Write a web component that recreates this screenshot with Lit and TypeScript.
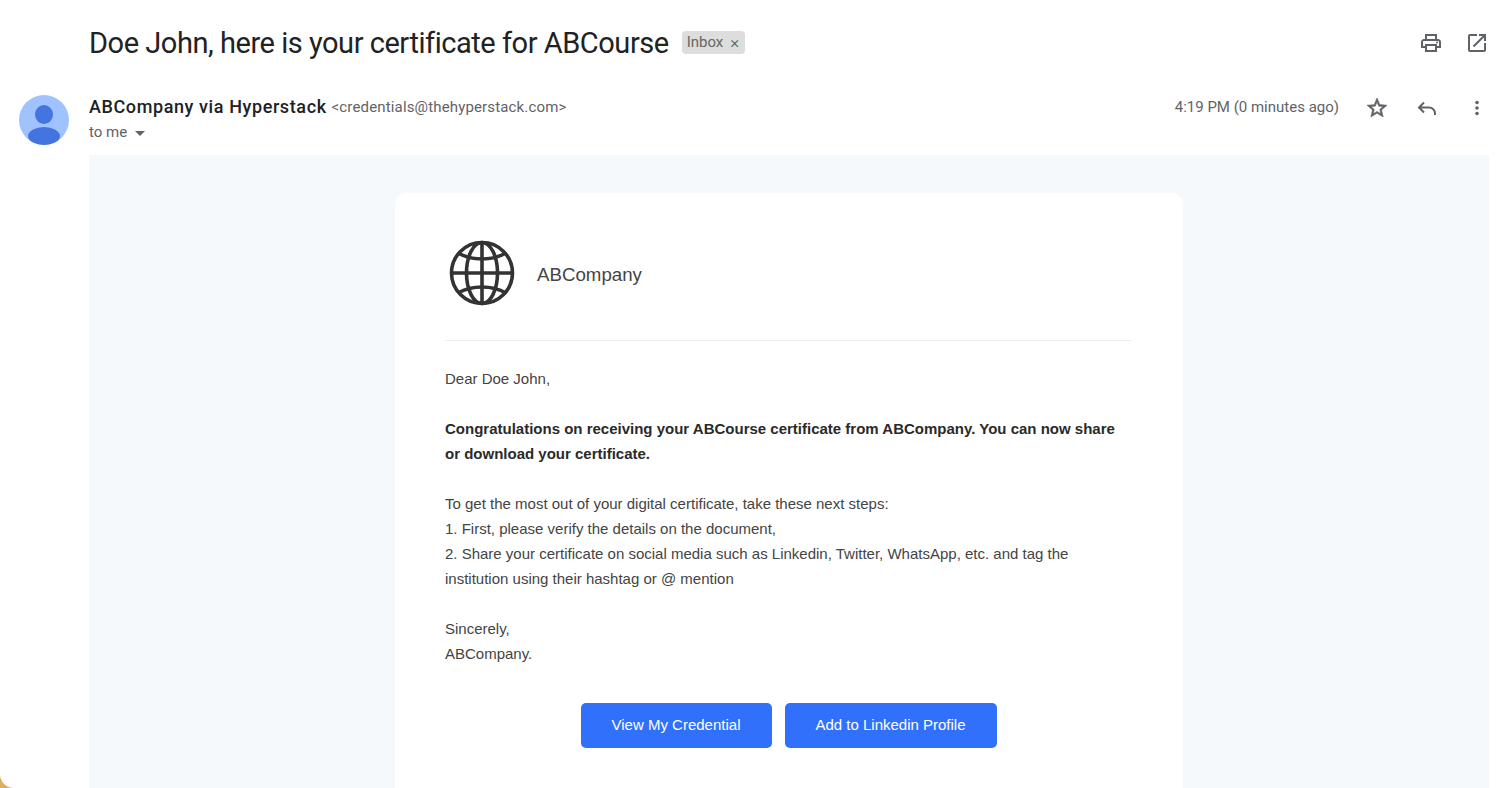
import { LitElement, html, css } from "lit";
import { customElement } from "lit/decorators.js";

@customElement("app-root")
export class AppRoot extends LitElement {
  static styles = css`
    :host {
      display: block;
      height: 100vh;
      background: #dcae60;
      overflow: hidden;
    }
    .page {
      height: 100%;
      background: #fff;
      border-bottom-left-radius: 14px;
      overflow: hidden;
      font-family: Roboto, "Liberation Sans", sans-serif;
      color: #202124;
    }
    .subject {
      display: flex;
      align-items: center;
      height: 84px;
      padding: 0 20px 0 89px;
    }
    .subject h1 {
      margin: 2px 0 0;
      font-size: 29px;
      font-weight: 400;
      letter-spacing: -0.46px;
      line-height: 36px;
      color: #222;
    }
    .chip {
      display: flex;
      align-items: center;
      gap: 7px;
      height: 23px;
      margin-left: 13px;
      padding: 0 6px 0 5px;
      border-radius: 4px;
      background: #dddddd;
      color: #666;
      font-size: 15px;
    }
    .chip i {
      font-style: normal;
      font-size: 17px;
      font-weight: 300;
      line-height: 1;
      color: #555;
    }
    .top-actions {
      display: flex;
      gap: 22px;
      margin-left: auto;
      margin-top: 1px;
    }
    svg.ic {
      display: block;
      width: 24px;
      height: 24px;
      fill: #5f6368;
    }
    .sender {
      display: flex;
      height: 71px;
      padding: 0 20px 0 19px;
    }
    .avatar {
      width: 50px;
      height: 50px;
      margin-top: 11px;
      flex: none;
    }
    .who {
      margin-left: 20px;
      padding-top: 12px;
    }
    .who b {
      font-size: 18px;
      font-weight: 500;
      letter-spacing: 0.6px;
      color: #202124;
    }
    .who span {
      position: relative;
      top: -1px;
      margin-left: 1px;
      font-size: 15px;
      letter-spacing: 0.15px;
      color: #5f6368;
    }
    .to {
      display: flex;
      align-items: center;
      gap: 8px;
      margin-top: 6px;
      font-size: 15px;
      color: #5f6368;
    }
    .caret {
      width: 0;
      height: 0;
      border: 5px solid transparent;
      border-top: 5px solid #5f6368;
      border-bottom: 0;
      margin-top: 2px;
    }
    .meta {
      display: flex;
      align-items: center;
      align-self: flex-start;
      margin-left: auto;
      margin-top: 12px;
      font-size: 15px;
      color: #5f6368;
    }
    .meta .time {
      margin-bottom: 2px;
    }
    .meta .btns {
      display: flex;
      gap: 26px;
      margin-left: 26px;
    }
    .star {
      stroke: #5f6368;
      stroke-width: 0.6;
    }
    .mail {
      height: 633px;
      margin: 0 20px 0 89px;
      padding-top: 38px;
      box-sizing: border-box;
      background: #f5f9fc;
    }
    .card {
      width: 788px;
      height: 640px;
      margin: 0 0 0 306px;
      padding: 46px 51px 0 50px;
      box-sizing: border-box;
      background: #fff;
      border-radius: 12px;
      font-family: "Liberation Sans", Arial, sans-serif;
      color: #444;
    }
    .brand {
      display: flex;
      align-items: center;
      height: 102px;
      padding: 0 0 33px 4px;
      border-bottom: 1px solid #eceef0;
      box-sizing: border-box;
      gap: 22px;
      font-size: 18.7px;
    }
    .brand span {
      padding-top: 4px;
    }
    .brand svg {
      width: 66px;
      height: 66px;
      flex: none;
    }
    .copy {
      margin-top: 25px;
      font-size: 15px;
      line-height: 25px;
    }
    .copy p {
      margin: 0 0 25px;
    }
    .copy strong {
      color: #2a2a2a;
    }
    .cta {
      display: flex;
      justify-content: center;
      gap: 13px;
      margin-top: 37px;
    }
    .cta a {
      display: flex;
      align-items: center;
      justify-content: center;
      height: 45px;
      padding-bottom: 2px;
      box-sizing: border-box;
      border-radius: 5px;
      background: #3070fb;
      color: #fff;
      font-size: 15px;
    }
    .cta a.first {
      width: 191px;
    }
    .cta a.second {
      width: 212px;
    }
  `;

  render() {
    return html`
      <div class="page">
        <div class="subject">
          <h1>Doe John, here is your certificate for ABCourse</h1>
          <div class="chip">Inbox <i>×</i></div>
          <div class="top-actions">
            <svg class="ic" viewBox="0 0 24 24">
              <path d="M19 8h-1V3H6v5H5c-1.66 0-3 1.34-3 3v6h4v4h12v-4h4v-6c0-1.66-1.34-3-3-3zM8 5h8v3H8V5zm8 12v2H8v-4h8v2zm2-2v-2H6v2H4v-4c0-.55.45-1 1-1h14c.55 0 1 .45 1 1v4h-2z" />
              <circle cx="18" cy="11.5" r="1" />
            </svg>
            <svg class="ic" viewBox="0 0 24 24">
              <path d="M19 19H5V5h7V3H5a2 2 0 0 0-2 2v14a2 2 0 0 0 2 2h14c1.1 0 2-.9 2-2v-7h-2v7zM14 3v2h3.59l-9.83 9.83 1.41 1.41L19 6.41V10h2V3h-7z" />
            </svg>
          </div>
        </div>
        <div class="sender">
          <svg class="avatar" viewBox="0 0 50 50">
            <circle cx="25" cy="25" r="25" fill="#a0c3ff" />
            <ellipse cx="25" cy="19.5" rx="9" ry="9.5" fill="#4374e0" />
            <ellipse cx="25" cy="41" rx="16" ry="9" fill="#4374e0" />
          </svg>
          <div class="who">
            <div><b>ABCompany via Hyperstack</b> <span>&lt;credentials@thehyperstack.com&gt;</span></div>
            <div class="to">to me <div class="caret"></div></div>
          </div>
          <div class="meta">
            <div class="time">4:19 PM (0 minutes ago)</div>
            <div class="btns">
              <svg class="ic star" viewBox="0 0 24 24">
                <path d="M22 9.24l-7.19-.62L12 2 9.19 8.63 2 9.24l5.46 4.73L5.82 21 12 17.27 18.18 21l-1.63-7.03L22 9.24zM12 15.4l-3.76 2.27 1-4.28-3.32-2.88 4.38-.38L12 6.1l1.71 4.04 4.38.38-3.32 2.88 1 4.28L12 15.4z" />
              </svg>
              <svg class="ic" viewBox="0 0 24 24">
                <path d="M9 6.5 4 11.5l5 5M4 11.5h10a6 6 0 0 1 6 6v1.5" fill="none" stroke="#5f6368" stroke-width="2" />
              </svg>
              <svg class="ic" viewBox="0 0 24 24">
                <circle cx="12" cy="6.5" r="1.8" />
                <circle cx="12" cy="12" r="1.8" />
                <circle cx="12" cy="17.5" r="1.8" />
              </svg>
            </div>
          </div>
        </div>
        <div class="mail">
          <div class="card">
            <div class="brand">
              <svg viewBox="0 0 66 66" fill="none" stroke="#333" stroke-width="3.6">
                <circle cx="33" cy="33" r="30.5" />
                <ellipse cx="33" cy="33" rx="15.5" ry="30.5" />
                <path d="M33 2.5v61M2.5 33h61" />
                <path d="M9 13c7 4 15 6 24 6s17-2 24-6M9 53c7-4 15-6 24-6s17 2 24 6" />
              </svg>
              <span>ABCompany</span>
            </div>
            <div class="copy">
              <p>Dear Doe John,</p>
              <p><strong>Congratulations on receiving your ABCourse certificate from ABCompany. You can now share or download your certificate.</strong></p>
              <p>
                To get the most out of your digital certificate, take these next steps:<br />
                1. First, please verify the details on the document,<br />
                2. Share your certificate on social media such as Linkedin, Twitter, WhatsApp, etc. and tag the institution using their hashtag or @ mention
              </p>
              <p>Sincerely,<br />ABCompany.</p>
            </div>
            <div class="cta">
              <a class="first">View My Credential</a>
              <a class="second">Add to Linkedin Profile</a>
            </div>
          </div>
        </div>
      </div>
    `;
  }
}
